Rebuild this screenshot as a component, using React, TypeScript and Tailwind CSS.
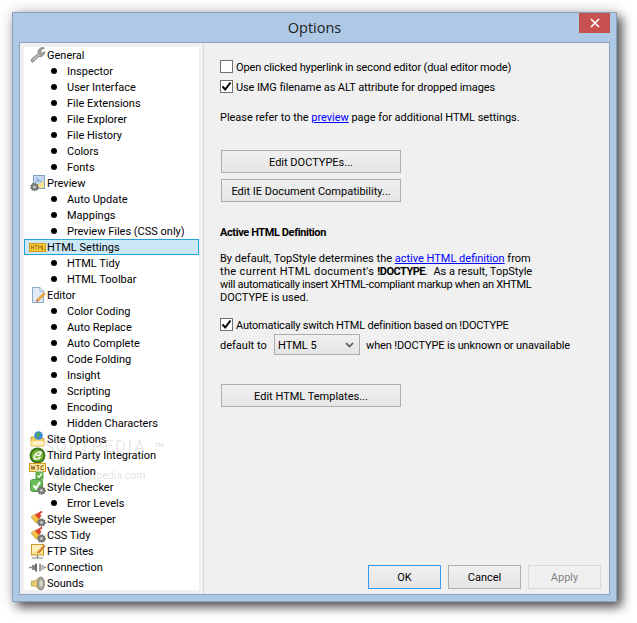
import type { ReactNode } from 'react'

const IconWrench = () => (
  <svg width="16" height="16" viewBox="0 0 16 16">
    <path d="M1 14 L2.5 15.5 L9 9.5 C11 10 13 9 14 7.5 L15 4.5 L12.5 6 L10.5 5 L11.5 2.5 L14.5 1 C12 0 9.5 1 8.5 3 C8 4.5 8 5.5 8 6.5 L1.5 12 Z" fill="#a3a3a0" stroke="#77776f" strokeWidth="0.7" />
    <path d="M3 13 L9 7.5" stroke="#dcdcd8" strokeWidth="1" />
  </svg>
)

const Gear = ({ x, y }: { x: number; y: number }) => (
  <g>
    <circle cx={x} cy={y} r="3.6" fill="#7d7d7d" />
    <circle cx={x} cy={y} r="3.6" fill="none" stroke="#5c5c5c" strokeWidth="1.4" strokeDasharray="1.2 1.2" />
    <circle cx={x} cy={y} r="1.3" fill="#d8d8d8" />
  </g>
)

const IconPreview = () => (
  <svg width="16" height="16" viewBox="0 0 16 16">
    <rect x="3.5" y="0.5" width="11" height="13" fill="#f6e58e" stroke="#7f9fc5" />
    <path d="M4 1 H14 V6 L9 9 H4 Z" fill="#c4d9ef" />
    <path d="M6 3 L12 7 M6 6 H9" stroke="#7d9cc0" />
    <Gear x={4.5} y={12} />
  </svg>
)

const IconHtml = () => (
  <svg width="17" height="9" viewBox="0 0 17 9">
    <rect x="0.5" y="0.5" width="16" height="8" fill="#f7c93e" stroke="#d49a12" />
    <path d="M2.5 2.5 V6.5 M4.5 2.5 V6.5 M2.5 4.5 H4.5 M5.5 2.5 H8.5 M7 2.5 V6.5 M9.5 6.5 V2.5 L11 4.5 L12.5 2.5 V6.5 M13.5 2.5 V6.5 H15.5" stroke="#a5740c" strokeWidth="0.8" fill="none" />
  </svg>
)

const IconEditor = () => (
  <svg width="16" height="16" viewBox="0 0 16 16">
    <path d="M2.5 0.5 H10 L13.5 4 V15.5 H2.5 Z" fill="#dfeaf7" stroke="#8aa8cc" />
    <path d="M10 0.5 V4 H13.5" fill="#ffffff" stroke="#8aa8cc" />
    <path d="M7 12.5 L14 5.5 L15.5 7 L8.5 14 L6.5 14.5 Z" fill="#f2b33d" stroke="#c0722a" strokeWidth="0.6" />
    <path d="M6.5 14.5 L7 12.5 L8.5 14 Z" fill="#d43f2a" />
  </svg>
)

const IconSite = () => (
  <svg width="16" height="16" viewBox="0 0 16 16">
    <path d="M1 6 H6 L7 7.5 H14 V15 H1 Z" fill="#f4cf62" stroke="#c49a2c" strokeWidth="0.8" />
    <path d="M1 10 H15 L14 15 H1 Z" fill="#fae08a" />
    <rect x="3" y="10.5" width="10" height="1" fill="#ffffff" />
    <rect x="3" y="12.5" width="10" height="1" fill="#ffffff" />
    <circle cx="8.5" cy="4.5" r="4.3" fill="#3f8fd6" />
    <path d="M6 3 L9 1.2 L10 4 L7.5 7 Z" fill="#55a944" />
  </svg>
)

const IconThird = () => (
  <svg width="17" height="17" viewBox="0 0 17 17">
    <circle cx="8.5" cy="8.5" r="8" fill="#3f7a1c" />
    <circle cx="8.5" cy="8.5" r="5.8" fill="#7ab53a" />
    <path d="M5 11.5 C5 7.5 8 5 12 5 C12 7 11 8.5 8.5 8.5 H7 M5 11.5 C7 12.5 10 12 11.5 10" stroke="#ffffff" strokeWidth="1.5" fill="none" />
  </svg>
)

const IconW3c = () => (
  <svg width="17" height="17" viewBox="0 0 17 17">
    <rect x="0.5" y="0.5" width="16" height="8" fill="#f7e7a8" stroke="#d49b1c" />
    <path d="M2 2.5 L3 6.5 L4 3.5 L5 6.5 L6 2.5 M7.5 2.5 H10 L8.5 4.2 C10.5 4.2 10.5 6.5 7.5 6.5 M15 3 H12 V6.5 H15" stroke="#8c5a08" strokeWidth="0.9" fill="none" />
    <rect x="6.5" y="8.5" width="8" height="8" rx="1" fill="#63b04a" stroke="#a7cfa0" />
    <path d="M8.5 12.5 L10 14.2 L12.8 10.5" stroke="#ffffff" strokeWidth="1.3" fill="none" />
  </svg>
)

const IconChecker = () => (
  <svg width="16" height="16" viewBox="0 0 16 16">
    <rect x="0.5" y="0.5" width="12" height="12" rx="2.5" fill="#6dbb5a" stroke="#4c9a3e" />
    <path d="M3.5 6.5 L6 9.5 L10 3" stroke="#ffffff" strokeWidth="2" fill="none" />
    <Gear x={11.5} y={11.5} />
  </svg>
)

const IconSweeper = () => (
  <svg width="16" height="16" viewBox="0 0 16 16">
    <path d="M1 6 L5.5 3 L10.5 9.5 L6 12 Z" fill="#f3c148" stroke="#b98820" strokeWidth="0.6" />
    <path d="M5 3.5 L9 1.5 L11.5 5 L8.5 8 Z" fill="#d9412c" />
    <path d="M9 2.5 L12 0.5" stroke="#d9412c" strokeWidth="2" />
    <Gear x={11.5} y={11.5} />
  </svg>
)

const IconFtp = () => (
  <svg width="16" height="17" viewBox="0 0 16 17">
    <rect x="1.5" y="1.5" width="12" height="10.5" fill="#fbe08a" stroke="#c9992c" />
    <path d="M2 2 H13 V5 L2 10 Z" fill="#fdf0bd" />
    <path d="M8 8.5 L14 2 L15.3 3.2 L9.3 9.7 L7.5 10.2 Z" fill="#e2892d" stroke="#a9601c" strokeWidth="0.5" />
    <path d="M7.5 12 V14.5 M2 15 H13" stroke="#808080" strokeWidth="1.2" />
  </svg>
)

const IconConnection = () => (
  <svg width="17" height="9" viewBox="0 0 17 9">
    <path d="M0 4.5 H3 M14 4.5 H17" stroke="#8d8d8d" strokeWidth="1.5" />
    <rect x="3" y="2" width="3" height="5" fill="#8a8a8a" />
    <rect x="6" y="0.5" width="2" height="8" fill="#6e6e6e" />
    <rect x="10" y="0.5" width="2" height="8" fill="#a0a0a0" />
    <rect x="12" y="2" width="3" height="5" fill="#bcbcbc" />
  </svg>
)

const IconSounds = () => (
  <svg width="14" height="15" viewBox="0 0 14 15">
    <path d="M0.5 5 H4 L9 1 V14 L4 10 H0.5 Z" fill="#eccb72" stroke="#b69a48" strokeWidth="0.8" />
    <ellipse cx="10" cy="7.5" rx="3.5" ry="6.5" fill="#a8a8a0" stroke="#77776f" strokeWidth="0.8" />
    <ellipse cx="10" cy="7.5" rx="1.6" ry="3.2" fill="#d5d5cc" />
  </svg>
)

type Node = { label: string; icon?: ReactNode; selected?: boolean }

const nodes: Node[] = [
  { label: 'General', icon: <IconWrench /> },
  { label: 'Inspector' },
  { label: 'User Interface' },
  { label: 'File Extensions' },
  { label: 'File Explorer' },
  { label: 'File History' },
  { label: 'Colors' },
  { label: 'Fonts' },
  { label: 'Preview', icon: <IconPreview /> },
  { label: 'Auto Update' },
  { label: 'Mappings' },
  { label: 'Preview Files (CSS only)' },
  { label: 'HTML Settings', icon: <IconHtml />, selected: true },
  { label: 'HTML Tidy' },
  { label: 'HTML Toolbar' },
  { label: 'Editor', icon: <IconEditor /> },
  { label: 'Color Coding' },
  { label: 'Auto Replace' },
  { label: 'Auto Complete' },
  { label: 'Code Folding' },
  { label: 'Insight' },
  { label: 'Scripting' },
  { label: 'Encoding' },
  { label: 'Hidden Characters' },
  { label: 'Site Options', icon: <IconSite /> },
  { label: 'Third Party Integration', icon: <IconThird /> },
  { label: 'Validation', icon: <IconW3c /> },
  { label: 'Style Checker', icon: <IconChecker /> },
  { label: 'Error Levels' },
  { label: 'Style Sweeper', icon: <IconSweeper /> },
  { label: 'CSS Tidy', icon: <IconSweeper /> },
  { label: 'FTP Sites', icon: <IconFtp /> },
  { label: 'Connection', icon: <IconConnection /> },
  { label: 'Sounds', icon: <IconSounds /> },
]

const TreeRow = ({ node }: { node: Node }) => {
  if (!node.icon) {
    return (
      <div className="flex h-4 items-center pl-[27px]">
        <span className="h-[6px] w-[6px] rounded-full bg-black" />
        <span className="ml-[10px] whitespace-nowrap">{node.label}</span>
      </div>
    )
  }
  return (
    <div className={`flex h-4 items-center border ${node.selected ? 'border-[#26a0da] bg-[#cbe8f6]' : 'border-transparent'}`}>
      <span className="flex w-[22px] shrink-0 justify-end">
        <span className="flex h-[14px] w-[19px] items-center justify-center">{node.icon}</span>
      </span>
      <span className="whitespace-nowrap">{node.label}</span>
    </div>
  )
}

const Check = ({ on }: { on?: boolean }) => (
  <span className="flex h-[13px] w-[13px] shrink-0 items-center justify-center border border-[#707070] bg-white">
    {on && (
      <svg width="11" height="11" viewBox="0 0 11 11">
        <path d="M1.5 5.5 L4.2 8.5 L9.5 1.5" stroke="#000000" strokeWidth="2" fill="none" />
      </svg>
    )}
  </span>
)

const Button = ({ children, className }: { children: ReactNode; className: string }) => (
  <div className={`flex items-center justify-center whitespace-nowrap border bg-gradient-to-b from-[#f0f0f0] to-[#e5e5e5] ${className}`}>
    {children}
  </div>
)

export default function App() {
  return (
    <div className="h-[623px] w-[637px] overflow-hidden bg-white pl-3 pt-3 text-[11px] leading-[13px] text-black [font-family:'Roboto',sans-serif]">
      <div className="flex h-[590px] w-[605px] flex-col border border-[#8b9fb5] bg-[#adc9e6] pb-[6px] pl-[6px] pr-[6px] shadow-[5px_5px_10px_rgba(0,0,0,0.65),0_0_14px_rgba(0,0,0,0.18)]">
        <div className="relative flex h-[29px] shrink-0 items-center justify-center text-[14.5px] text-[#222222] [font-family:'Open_Sans',sans-serif]">
          Options
          <div className="absolute right-0 top-0 flex h-5 w-[31px] items-center justify-center bg-[#c75050]">
            <svg width="10" height="10" viewBox="0 0 10 10">
              <path d="M1 1 L9 9 M9 1 L1 9" stroke="#ffffff" strokeWidth="1.7" />
            </svg>
          </div>
        </div>
        <div className="flex min-h-0 flex-1 border border-[#8fa4ba] bg-[#f0f0f0]">
          <div className="relative my-1 ml-1 w-[175px] shrink-0 bg-white">
            {nodes.map(node => (
              <TreeRow key={node.label} node={node} />
            ))}
            <div className="absolute left-[20px] top-[393px] text-[17px] tracking-[1.5px] text-[#000000]/10">SOFTPEDIA</div>
            <div className="absolute left-[131px] top-[391px] text-[6px] text-[#000000]/20">TM</div>
            <div className="absolute left-[28px] top-[422px] text-[10.5px] text-[#000000]/15">www.softpedia.com</div>
          </div>
          <div className="ml-1 flex flex-1 flex-col border-l border-[#d9d9d9] pb-[5px] pl-[16px] pr-[8px] pt-[17px]">
            <div className="flex h-[13px] items-center gap-[3px] whitespace-nowrap">
              <Check />
              <span className="pt-[2px] tracking-[-0.14px]">Open clicked hyperlink in second editor (dual editor mode)</span>
            </div>
            <div className="mt-[7px] flex h-[13px] items-center gap-[3px] whitespace-nowrap">
              <Check on />
              <span className="pt-[2px] tracking-[-0.1px]">Use IMG filename as ALT attribute for dropped images</span>
            </div>
            <p className="mt-[18px] whitespace-nowrap tracking-[-0.03px]">
              Please refer to the <span className="text-[#0000ff] underline">preview</span> page for additional HTML settings.
            </p>
            <Button className="ml-[1px] mt-[26px] h-[23px] w-[180px] border-[#adadad] pt-[2px]">Edit DOCTYPEs...</Button>
            <Button className="ml-[1px] mt-[6px] h-[23px] w-[180px] border-[#adadad] pt-[2px]">Edit IE Document Compatibility...</Button>
            <h2 className="mt-[24px] font-bold tracking-[-0.4px]">Active HTML Definition</h2>
            <p className="mt-[13px] whitespace-nowrap">
              By default, TopStyle determines the <span className="text-[#0000ff] underline">active HTML definition</span> from
              <br />
              <span className="tracking-[0.35px]">the current HTML document's </span>
              <b className="tracking-[-0.5px]">!DOCTYPE</b>.&nbsp; As a result, TopStyle
              <br />
              <span className="tracking-[-0.3px]">will automatically insert XHTML-compliant markup when an XHTML</span>
              <br />
              DOCTYPE is used.
            </p>
            <div className="mt-[14px] flex h-[13px] items-center gap-[3px] whitespace-nowrap">
              <Check on />
              <span className="pt-[2px] tracking-[-0.22px]">Automatically switch HTML definition based on !DOCTYPE</span>
            </div>
            <div className="mt-[3px] flex h-[21px] items-center whitespace-nowrap">
              <span className="w-[54px] pt-[2px]">default to</span>
              <div className="flex h-[21px] w-[86px] items-center justify-between border border-[#adadad] bg-gradient-to-b from-[#f0f0f0] to-[#e5e5e5] pl-[3px] pr-[5px]">
                <span className="pt-[2px]">HTML 5</span>
                <svg width="9" height="6" viewBox="0 0 9 6">
                  <path d="M1 1 L4.5 4.5 L8 1" stroke="#555555" strokeWidth="1.6" fill="none" />
                </svg>
              </div>
              <span className="ml-[6px] pt-[2px] tracking-[-0.13px]">when !DOCTYPE is unknown or unavailable</span>
            </div>
            <Button className="ml-[1px] mt-[29px] h-[23px] w-[180px] border-[#adadad] pt-[2px]">Edit HTML Templates...</Button>
            <div className="mt-auto flex justify-end gap-[7px]">
              <Button className="h-6 w-[73px] border-[#3399ff]">OK</Button>
              <Button className="h-6 w-[73px] border-[#adadad]">Cancel</Button>
              <div className="flex h-6 w-[73px] items-center justify-center border border-[#d9d9d9] text-[#838383]">Apply</div>
            </div>
          </div>
        </div>
      </div>
    </div>
  )
}
